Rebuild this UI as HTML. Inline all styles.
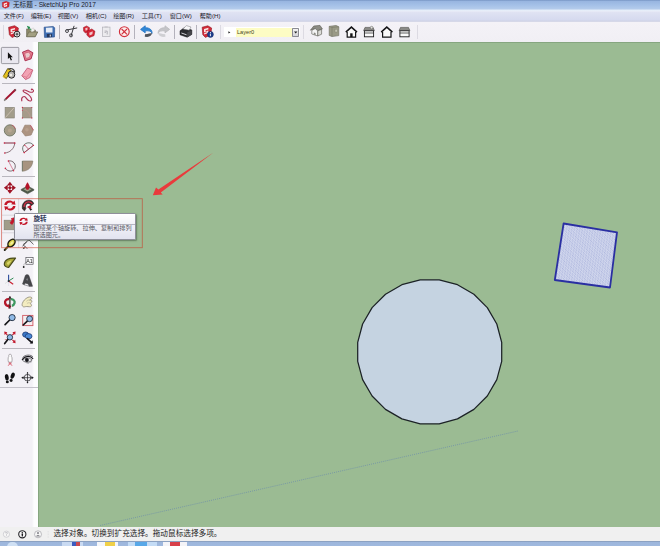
<!DOCTYPE html>
<html><head><meta charset="utf-8"><title>SketchUp</title>
<style>
html,body{margin:0;padding:0;}
body{width:660px;height:546px;overflow:hidden;background:#9bbb93;font-family:"Liberation Sans","Noto Sans CJK SC",sans-serif;color:#222;}
#root{position:relative;width:660px;height:546px;overflow:hidden;}
.abs{position:absolute;}
#title{left:0;top:0;width:660px;height:11.5px;background:linear-gradient(#7391c0 0px,#98b5e0 1.2px,#a4c0e7 5px,#b2caeb 8.5px,#d8e4f5 10px,#f4f7fc 11px,#e6e9f6 11.5px);}
#title span{position:absolute;left:13px;top:0.2px;font-size:6.6px;line-height:9px;color:#1a1a2a;white-space:nowrap;}
#menu{left:0;top:11.5px;width:660px;height:10px;background:linear-gradient(#e0e3f3,#d6daef 7.5px,#d0d3e6 9.3px,#e6e5ee 10px);}
#menu span{position:absolute;top:-0.3px;margin-left:-0.3px;font-size:6.15px;line-height:9px;color:#1a1a2a;white-space:nowrap;}
#tbar{left:0;top:21.5px;width:660px;height:20.5px;background:linear-gradient(#f4f2f7,#f1eff4);}
#left{left:0;top:42px;width:37.5px;height:485px;background:linear-gradient(90deg,#f3f1f6 32px,#fdfdfe 34px);}
#view{left:37.5px;top:42px;width:622.5px;height:485px;background:#9bbb93;box-shadow:inset 1px 1px 0 #86a680;}
#status{left:0;top:527px;width:660px;height:14px;background:#f0f0f0;}
#status span{position:absolute;left:53.4px;top:2.4px;font-size:7.65px;line-height:9px;color:#222;white-space:nowrap;}
#task i{position:absolute;top:1.5px;height:5px;display:block;}
#task{left:0;top:540.5px;width:660px;height:6px;background:linear-gradient(#8093b0 0,#9db6dc 1.2px,#a1badf 100%);}
.vsep{position:absolute;top:25px;width:0.7px;height:14px;background:#b4b2bc;}
.hsep{position:absolute;left:2px;width:33px;height:0.8px;background:#b9b7be;}
#combo{left:224px;top:27.2px;width:76px;height:10.3px;background:#fff;}
#combo .y{position:absolute;left:11.5px;top:1.2px;width:56px;height:8.2px;background:#fdfcc4;}
#combo .t{position:absolute;left:13px;top:0.6px;font-size:5.6px;line-height:9px;color:#45451c;}
#combo .b{position:absolute;left:68.3px;top:0.4px;width:6.8px;height:9.4px;background:linear-gradient(#f4f4f4,#d4d4d8);border:0.5px solid #8a8a92;box-sizing:border-box;border-radius:0.8px;}
#tip{left:14.2px;top:212.6px;width:121.7px;height:27.6px;box-sizing:border-box;border:0.6px solid #8f8f9a;border-radius:1.5px;background:linear-gradient(#ffffff,#f2f2f8 40%,#e2e3ef);box-shadow:1px 1px 1.5px rgba(60,80,60,0.55);}
#tip .h{position:absolute;left:18.2px;top:0.7px;font-size:6.6px;line-height:9px;font-weight:bold;color:#303a5a;white-space:nowrap;}
#tip .ln{position:absolute;left:18.2px;top:10.1px;width:102px;height:0.5px;background:#b4b4c0;}
#tip .d{position:absolute;left:18.2px;font-size:6.15px;line-height:7px;color:#585864;white-space:nowrap;}
</style></head><body><div id="root">
<div id="view" class="abs"></div>
<div id="title" class="abs"><span>无标题 - SketchUp Pro 2017</span></div>
<div id="menu" class="abs"><span style="left:4px">文件(F)</span><span style="left:31px">编辑(E)</span><span style="left:58px">视图(V)</span><span style="left:86px">相机(C)</span><span style="left:113.5px">绘图(R)</span><span style="left:142px">工具(T)</span><span style="left:170px">窗口(W)</span><span style="left:200px">帮助(H)</span></div>
<div id="tbar" class="abs"></div>
<div id="left" class="abs"></div>
<div class="vsep" style="left:59.2px"></div><div class="vsep" style="left:134.3px"></div><div class="vsep" style="left:173.8px"></div><div class="vsep" style="left:195.8px"></div><div class="vsep" style="left:2.6px;background:#dcdae2"></div><div class="vsep" style="left:220px;background:#dcdae2"></div><div class="vsep" style="left:302.5px;background:#dcdae2"></div><div class="vsep" style="left:416.5px;background:#dcdae2"></div><div class="hsep" style="top:83.0px"></div><div class="hsep" style="top:175.6px"></div><div class="hsep" style="top:290.6px"></div><div class="hsep" style="top:348.2px"></div><div class="hsep" style="top:387px;left:0;width:37.5px;background:#c4c2ca"></div>
<div id="combo" class="abs"><div class="y"></div><div class="t">Layer0</div><div class="b"></div></div>
<div id="status" class="abs"><span>选择对象。切换到扩充选择。拖动鼠标选择多项。</span></div>
<div id="task" class="abs"><i style="left:7px;width:11px;background:#cfe0f4;border-radius:5px 5px 0 0"></i><i style="left:62px;width:21px;background:#c9daf2"></i><i style="left:72px;width:4px;background:#3c5cc0"></i><i style="left:76px;width:4px;background:#c84a50"></i><i style="left:97px;width:21px;background:#f4f6fa"></i><i style="left:105px;width:10px;background:#f0d048"></i><i style="left:128px;width:29px;background:#c4dcf6"></i><i style="left:135px;width:12px;background:#58a8e8"></i><i style="left:163px;width:24px;background:#f4f4f8"></i><i style="left:170px;width:10px;background:#d8404a"></i></div>
<svg class="abs" style="left:0;top:0;filter:blur(0.25px)" width="660" height="546" viewBox="0 0 660 546">
<g fill="#f7f7f7" stroke="#8c8c92" stroke-width="0.7"><circle cx="6.4" cy="534.2" r="3.1" stroke="#c4c4ca"/><circle cx="22.3" cy="534.3" r="3.6" stroke="#26262a" stroke-width="1.1"/><circle cx="38" cy="534.3" r="3.5" stroke="#a2a2a8"/></g>
<g font-family="Liberation Sans, sans-serif" font-size="4.6" font-weight="bold" text-anchor="middle"><text x="6.4" y="535.9" fill="#b4b4ba">?</text></g>
<circle cx="22.3" cy="532.9" r="0.8" fill="#1a1a1e"/><path d="M21.5 534 L23.1 534 L22.8 536.6 L21.8 536.6 Z" fill="#1a1a1e"/>
<circle cx="38" cy="533.1" r="1.1" fill="#8a8a90"/><path d="M36 536.6 C36.2 534.4 39.8 534.4 40 536.6 Z" fill="#8a8a90"/>
<path d="M48.2 531 V538" stroke="#c8c8cc" stroke-width="0.5" stroke-dasharray="0.8 0.8"/>
<g transform="translate(-0.9,-1.1)"><path d="M3.2 3.6 L7 2.4 L10.2 3.6 L9.8 7.8 L6.2 9.4 L3.4 8 Z" fill="#d8242e" stroke="#9a1620" stroke-width="0.4"/><path d="M4.6 4.6 L8 3.6 L8 4.8 L6 5.4 L6 6 L8 5.6 L8 7.4 L4.8 8.4 L4.8 7.4 L6.8 6.8 L6.8 6.4 L4.6 7 Z" fill="#fbeaea"/></g>
</svg>
<svg class="abs" style="left:0;top:0" width="660" height="546" viewBox="0 0 660 546">
<defs>
<pattern id="dots" width="2.6" height="1.6" patternUnits="userSpaceOnUse" patternTransform="rotate(9)"><rect width="2.6" height="1.6" fill="#d2d8ee"/><circle cx="0.65" cy="0.4" r="0.37" fill="#8490ca"/><circle cx="1.95" cy="1.2" r="0.37" fill="#8490ca"/></pattern>
</defs>
<polygon points="501.7,361.3 496.8,379.6 487.3,396.0 473.9,409.4 457.5,418.9 439.2,423.8 420.2,423.8 401.9,418.9 385.5,409.4 372.1,396.0 362.6,379.6 357.7,361.3 357.7,342.3 362.6,324.0 372.1,307.6 385.5,294.2 401.9,284.7 420.2,279.8 439.2,279.8 457.5,284.7 473.9,294.2 487.3,307.6 496.8,324.0 501.7,342.3" fill="#c5d3e1" stroke="#1c2226" stroke-width="1.25" stroke-linejoin="round"/>
<polygon points="563.6,223.5 617,232.3 610,287.5 554.8,280" fill="url(#dots)" stroke="#2a2fa2" stroke-width="1.8" stroke-linejoin="round"/>
<line x1="100" y1="525.5" x2="518" y2="431" stroke="#5f7fb0" stroke-width="0.7" stroke-dasharray="0.8 1.2"/>
<polygon points="213.5,152.6 160.8,192.4 162.7,194.6 152.8,195.2 156,187.6 158.4,189.6" fill="#e93a3c"/>
</svg>
<svg class="abs" style="left:0;top:0;filter:blur(0.25px)" width="660" height="546" viewBox="0 0 660 546"><g transform="translate(0,0)"><rect x="1.4" y="47.4" width="17.4" height="16.2" rx="0.8" fill="#e9e7ef" stroke="#86868e" stroke-width="0.8"/></g><g transform="translate(0,0)"><path d="M18.6 199 V248 M2 215.2 H37 M2 232.8 H14.6" stroke="#cfcbd2" stroke-width="0.7" fill="none"/></g><g transform="translate(9.8,55.8)"><path d="M-1.9 -3.6 L-1.9 3.2 L-0.3 1.8 L1.0 4.6 L2.2 4.1 L0.9 1.4 L3.0 1.4 Z" fill="#111"/></g><g transform="translate(27.5,55.4)"><path d="M-5 -3.2 L0.6 -5.4 L5.4 -2.6 L3.6 3.4 L-2.4 5.4 Z" fill="#e27a8c" stroke="#a52244" stroke-width="0.9" stroke-linejoin="round"/><path d="M-2.8 -2 L0.8 -3.2 L3 -1.4 L2 2 L-1.6 3 Z" fill="#f3c4c8" stroke="#b8405a" stroke-width="0.5"/><circle cx="0.2" cy="0" r="1.1" fill="#d8d0d0"/></g><g transform="translate(8.9,73.6)"><path d="M-5.6 2.5 L-1.2 -5 L2.2 -3.4 L-2.6 5 Z" fill="#e6c21e" stroke="#4a4210" stroke-width="0.8" stroke-linejoin="round"/><path d="M-3.6 4.6 L-5.8 3.2 L-5.2 1.8" fill="none" stroke="#e0b818" stroke-width="1"/><ellipse cx="2.6" cy="1" rx="3.3" ry="3.6" fill="#b9b7b4" stroke="#2a2a2a" stroke-width="1"/><path d="M-0.5 -4.6 C2.5 -6 5.6 -4.4 5.8 -1.2" fill="none" stroke="#333" stroke-width="1.1"/><circle cx="2" cy="1.4" r="1.3" fill="#f1efe8"/></g><g transform="translate(27.2,73.6)"><path d="M-5.4 2.2 L0.2 -5.6 L5.6 -3.6 L2.6 4 L-1.6 6 Z" fill="#f2a3b4" stroke="#c0506e" stroke-width="0.8" stroke-linejoin="round"/><path d="M-5.4 2.2 L-0.6 3.6 L5.6 -3.6 M-0.6 3.6 L-1.6 6" fill="none" stroke="#d06880" stroke-width="0.6"/></g><g transform="translate(10,95)"><path d="M-4.6 4.4 L5.4 -5.2" stroke="#a3122e" stroke-width="2" stroke-linecap="butt"/><path d="M-5.8 5.6 L-4 3.8" stroke="#77706c" stroke-width="1.6"/><path d="M4.6 -4.4 L5.8 -5.6" stroke="#7a4a50" stroke-width="2"/></g><g transform="translate(27.8,95.2)"><path d="M-6 5.6 C-7 1.5 -3.5 0.5 -2.2 2.2 C-0.5 4.5 1.5 6.5 3.2 5.6 C4.8 4.6 3 1.2 0.6 -0.6 C-2.4 -2.8 -5.4 -3.2 -4.6 -4.8 C-3.6 -6.4 0.6 -3.4 2.6 -3 C5.2 -2.6 6.6 -4.2 5 -5.6 C4.2 -6.4 3.4 -6 3.6 -5.4" fill="none" stroke="#ae3654" stroke-width="1.15" stroke-linecap="round"/></g><g transform="translate(9.7,112.7)"><rect x="-4.6" y="-5.3" width="9.2" height="10.6" fill="#a29c8a" stroke="#7f7c70" stroke-width="0.6"/><path d="M-4.4 5 L4.4 -5" stroke="#cdbfb2" stroke-width="0.9"/></g><g transform="translate(27.1,112.7)"><rect x="-4.8" y="-5.3" width="9.6" height="10.6" fill="#a69a8a" stroke="#8a8274" stroke-width="0.5"/><path d="M-4.6 -3 C-1 -3.4 2.6 0 3.4 5" stroke="#c09a94" stroke-width="0.7" fill="none"/><g fill="#c8324e"><circle cx="-4.7" cy="-5.2" r="0.65"/><circle cx="4.7" cy="-5.2" r="0.5"/><circle cx="-4.7" cy="5.2" r="0.65"/><circle cx="4.7" cy="5.2" r="0.65"/><circle cx="-4.7" cy="-2.4" r="0.5"/></g></g><g transform="translate(9.9,130.4)"><circle r="5.6" fill="#a59c88" stroke="#6c7462" stroke-width="0.9"/><circle r="2" fill="#b7a792"/><path d="M2 -5.4 A5.7 5.7 0 0 1 5.5 -1.6" stroke="#c85060" stroke-width="0.7" fill="none"/></g><g transform="translate(27.5,130.4)"><path d="M-2.6 -5.2 L2.8 -5.2 L5.8 -0.4 L3.6 4.6 L-2.2 5.6 L-5.6 1.2 Z" fill="#ad9482" stroke="#96806e" stroke-width="0.7" stroke-linejoin="round"/><circle cx="-0.6" cy="-0.6" r="1.8" fill="#b9a08e"/><path d="M3 -5.2 L5.8 -0.4" stroke="#c8405a" stroke-width="0.7"/></g><g transform="translate(9.6,148)"><path d="M-5.2 -5 L5.2 -5 M5.2 -5 C4.6 1 0 4.6 -4.8 5" fill="none" stroke="#5c4048" stroke-width="0.7"/><path d="M-5.2 -5 L5.2 -5" stroke="#b03050" stroke-width="0.6"/><g fill="#d02848"><circle cx="-5.2" cy="-5" r="0.8"/><circle cx="5.2" cy="-5" r="0.8"/><circle cx="-4.8" cy="5" r="0.8"/></g></g><g transform="translate(27.4,148)"><path d="M-3.2 4.6 C-7 0 -3.4 -5.4 1.6 -5.2 C4 -5 5.4 -3.8 6 -2.6 Z" fill="none" stroke="#4c5a50" stroke-width="0.8"/><path d="M-3.2 4.6 L6 -2.6 M-2.6 -2.8 L1.2 1.2" stroke="#b83050" stroke-width="0.7"/><g fill="#d02848"><circle cx="-3.2" cy="4.6" r="0.8"/><circle cx="6" cy="-2.6" r="0.7"/><circle cx="-2.6" cy="-2.8" r="0.6"/></g></g><g transform="translate(10.2,166)"><path d="M-1.8 -5 C3 -6 6.4 -1.4 4.6 2.6 C3 5.8 -2.6 6 -4.8 2.4" fill="none" stroke="#5a4a50" stroke-width="0.8"/><path d="M-1.8 -5 L3.4 4.8" stroke="#c04060" stroke-width="0.6"/><g fill="#d02848"><circle cx="-1.8" cy="-5" r="0.8"/><circle cx="-4.8" cy="2.4" r="0.8"/><circle cx="3.4" cy="4.8" r="0.7"/></g></g><g transform="translate(27.4,166)"><path d="M-5 -5 L5.4 -5 C5 1 0.6 5 -5 5.2 Z" fill="#a89480" stroke="#807868" stroke-width="0.6"/><path d="M-5 -5 L-5 5.2" stroke="#707868" stroke-width="0.9"/></g><g transform="translate(9.9,187.8)"><g fill="#a01426"><path d="M0 -6 L3 -2.2 L-3 -2.2 Z M0 6 L3 2.2 L-3 2.2 Z M-6 0 L-2.2 -3 L-2.2 3 Z M6 0 L2.2 -3 L2.2 3 Z"/><rect x="-1.1" y="-1.1" width="2.2" height="2.2"/><rect x="-0.5" y="-2.4" width="1" height="4.8"/><rect x="-2.4" y="-0.5" width="4.8" height="1"/></g></g><g transform="translate(27.5,188.4)"><path d="M-6.4 1 L0 -2.4 L6.4 1 L6.4 1.8 L0 5.4 L-6.4 1.8 Z" fill="#4e5a4a" stroke="#3c463a" stroke-width="0.5" stroke-linejoin="round"/><path d="M-4 0.9 L0 -1.2 L4 0.9 L0 3.2 Z" fill="#a4a48c"/><path d="M0 -6.2 C0.8 -5 2.4 -2.6 2.2 -1.4 C2 -0.4 1.2 0.2 1 1.4 L-1 1.4 C-1.2 0.2 -2 -0.4 -2.2 -1.4 C-2.4 -2.6 -0.8 -5 0 -6.2 Z" fill="#b4142a"/></g><g transform="translate(9.9,205.4)"><g id="rot"><path d="M-5.6 -0.4 C-5.4 -3.6 -2.4 -5.2 0.4 -4.8 C1.6 -4.6 2.6 -4.2 3.3 -3.5 L4.6 -4.9 L5.6 -0.6 L1.2 -1.1 L2.4 -2.3 C1.2 -3.2 -0.6 -3.2 -1.8 -2.4 C-2.6 -1.9 -3 -1.2 -3.1 -0.4 Z" fill="#c4162a"/><path d="M5.6 0.6 C5.4 3.8 2.4 5.4 -0.4 5 C-1.6 4.8 -2.6 4.4 -3.3 3.7 L-4.6 5.1 L-5.6 0.8 L-1.2 1.3 L-2.4 2.5 C-1.2 3.4 0.6 3.4 1.8 2.6 C2.6 2.1 3 1.4 3.1 0.6 Z" fill="#c4162a"/></g></g><g transform="translate(27.5,205.4)"><path d="M-5 3.6 C-6.2 -1.4 -2.6 -5.4 1.6 -5.2 C4.2 -5 5.8 -3.6 6.2 -1.6 L3.4 0.4 C3 -1.2 2 -2 0.6 -2 C-1.6 -2 -2.6 0.6 -1.6 3 L-3 5.4 Z" fill="#3a2c2c" stroke="#1e1a1a" stroke-width="0.6"/><path d="M-3.4 1.6 C-3.6 -1.4 -1.4 -3.8 1.4 -3.6 C3 -3.5 4.2 -2.8 4.8 -1.6" fill="none" stroke="#d4304a" stroke-width="1.3"/><path d="M-0.6 1.6 L3.6 -0.6 L3.8 4.2 Z" fill="#b8142c"/><path d="M1.2 2.6 L4.8 3.8 L3 5.4 Z" fill="#2a2222"/></g><g transform="translate(0,0)"><rect x="4.1" y="220.2" width="11" height="9.6" fill="#a09c88" stroke="#7e7c6e" stroke-width="0.6"/><path d="M10 223 L12.2 219.8 L11 218.8 L15.4 217.2 L15.4 222 L14.2 221 L12.2 224.4 Z" fill="#c4142a" stroke="#c4142a" stroke-width="0.6" stroke-linejoin="round"/></g><g transform="translate(9.9,244.2)"><path d="M-5.2 5.8 L-1.8 2.2" stroke="#1c1a10" stroke-width="1.9" stroke-linecap="round"/><path d="M-4.6 5.2 L-1.8 2.2" stroke="#d6b41a" stroke-width="0.8"/><ellipse cx="1.6" cy="-1.2" rx="4.4" ry="2.9" transform="rotate(-48 1.6 -1.2)" fill="#d9d24a" stroke="#1c1a10" stroke-width="1.3"/><ellipse cx="1.9" cy="-1.3" rx="2" ry="1.1" transform="rotate(-48 1.9 -1.3)" fill="#f2ee9a"/></g><g transform="translate(27.5,245)"><path d="M-5 1.4 L1.2 -5.4 L6 -0.6 M-0.6 -3.4 L-4.6 -0.2 M-3.8 0.2 L-0.2 3.8 M-4.6 3.6 L-2.2 1.6" fill="none" stroke="#2c2c2c" stroke-width="0.7"/><path d="M0.4 -5.2 L2.2 -5.8 L1.6 -4 Z" fill="#222"/><path d="M-3.8 2.4 L-2.6 3.6 L-4.4 4 Z" fill="#222"/></g><g transform="translate(9.9,262.6)"><path d="M-5.6 1.6 C-5.4 -2.8 -0.6 -5.2 5.6 -4.4 L-1.2 4.8 C-3.6 4.6 -5.4 3.6 -5.6 1.6 Z" fill="#a8a638" stroke="#4a4c1e" stroke-width="1.2" stroke-linejoin="round"/><path d="M-3.2 1.4 C-3 -0.8 -0.6 -2.2 1.8 -2.2 L-1.4 2.4 Z" fill="#d8d468"/></g><g transform="translate(0,0)"><rect x="25.9" y="257.6" width="7.2" height="6.6" fill="#fbfbfd" stroke="#3a3a40" stroke-width="0.6"/><text x="29.5" y="263" font-family="Liberation Sans, sans-serif" font-size="5.4" text-anchor="middle" fill="#222">A1</text><path d="M25.8 262.4 L24 264.4 L23.7 266.4" fill="none" stroke="#555" stroke-width="0.5" stroke-dasharray="0.8 0.5"/><circle cx="23.7" cy="267" r="0.9" fill="#1a1a1a"/></g><g transform="translate(9.6,280.4)"><path d="M-1 0.6 L-1 -5.6" stroke="#2a4a9a" stroke-width="1.1"/><path d="M-1 0.6 L3.8 -2.4" stroke="#2e8a52" stroke-width="1"/><path d="M-1 0.6 L3.6 3.8" stroke="#c81e30" stroke-width="1.1"/><path d="M-1 0.6 L-4.6 3.2" stroke="#9ab0a0" stroke-width="0.5" stroke-dasharray="0.7 0.6"/><path d="M-1 0.6 L-1 5" stroke="#a0a8c8" stroke-width="0.5" stroke-dasharray="0.7 0.6"/><circle cx="-1" cy="0.6" r="1" fill="#1e2a3a"/></g><g transform="translate(27.4,280.4)"><path d="M-4.8 3.6 L-2 -5 C-1.6 -6 1 -6 1.4 -5 L4.6 4.4 L5 5.8 L1.6 5.8 L1 3.6 L-2.4 2.6 L-3 4.4 Z" fill="#46464a" stroke="#2c2c30" stroke-width="0.5" stroke-linejoin="round"/><path d="M-4.8 3.6 L-3 4.4 L1.6 5.8 L5 5.8" fill="none" stroke="#77777c" stroke-width="0.7"/><path d="M-1.2 -0.4 L0.6 0.2 L-0.2 -2.6 Z" fill="#8a8a90"/></g><g transform="translate(9.9,302.6)"><path d="M-0.8 -3.4 C-3.8 -3.6 -5.2 -1.6 -4.8 0.4 C-4.4 2.4 -2.6 3.6 -0.6 3.6" fill="none" stroke="#b4182c" stroke-width="2.3"/><path d="M-1.4 1.2 L1.6 3.8 L-1.6 6.2 Z" fill="#b4182c"/><path d="M0.8 -3.4 C3.8 -3.6 5.2 -1.4 4.6 0.6 C4.2 2 3.2 2.8 2 3.2" fill="none" stroke="#3d9860" stroke-width="2.3"/><path d="M0 -6.2 L0 6.2" stroke="#3a2a2a" stroke-width="1.3"/><path d="M-1.6 -4.2 L0 -6.6 L1.6 -4.2 Z" fill="#3a2a2a"/></g><g transform="translate(27.3,302.2)"><g transform="scale(0.9)"><path d="M-5.6 1.6 C-4.6 -1.4 -2.4 -4 0.8 -5.4 C2.8 -6.2 5 -5.6 5.2 -4.6 C5.4 -3.6 3 -3.2 2.6 -2.4 C4 -2.6 5.4 -1.8 5 -0.6 C4.6 0.4 3.4 0.4 3.6 1.4 C3.8 2.4 5.2 3 4.4 4.4 C3.6 5.6 1.2 4.8 -0.6 4.8 C-2.6 4.8 -3.4 5.6 -4.6 5 C-5.8 4.2 -6 2.8 -5.6 1.6 Z" fill="#f3ecc0" stroke="#8e8a78" stroke-width="0.9" stroke-linejoin="round"/><path d="M-1 -1 C0.4 -2.4 1.6 -2.6 2.6 -2.4 M-0.4 1.4 C1 0.4 2.4 0.4 3.6 1.2" fill="none" stroke="#a8a490" stroke-width="0.6"/></g></g><g transform="translate(0,0)"><path d="M9.93 319.77000000000004 L5.1 324.6" stroke="#16161a" stroke-width="1.7" stroke-linecap="round"/><circle cx="12.1" cy="317.6" r="3.1" fill="#8fb9e6" stroke="#1e2a3c" stroke-width="0.9"/></g><g transform="translate(0,0)"><rect x="22.7" y="315.4" width="10.2" height="10.2" fill="#f6eef0" stroke="#d05a64" stroke-width="0.9"/><path d="M27.57 320.83 L23.200000000000003 325.0" stroke="#16161a" stroke-width="1.7" stroke-linecap="round"/><circle cx="29.6" cy="318.8" r="2.9" fill="#8fb9e6" stroke="#1e2a3c" stroke-width="0.9"/></g><g transform="translate(0,0)"><g fill="#c21a2e"><path d="M4.2 331.6 L7.4 332.2 L6.4 333.2 L7.8 334.6 L7 335.4 L5.6 334 L4.6 335 Z"/><path d="M15.6 331.6 L12.4 332.2 L13.4 333.2 L12 334.6 L12.8 335.4 L14.2 334 L15.2 335 Z"/><path d="M15.6 343.2 L12.4 342.6 L13.4 341.6 L12 340.2 L12.8 339.4 L14.2 340.8 L15.2 339.8 Z"/><path d="M4.4 339.6 L6.8 339.6 L6.8 340.6 Z"/></g><path d="M8.01 339.19 L4.7 343.5" stroke="#16161a" stroke-width="1.7" stroke-linecap="round"/><circle cx="9.9" cy="337.3" r="2.7" fill="#8fb9e6" stroke="#1e2a3c" stroke-width="0.9"/></g><g transform="translate(0,0)"><ellipse cx="25.6" cy="334.6" rx="3" ry="2.6" fill="#3a78c8" stroke="#1c3a74" stroke-width="0.8"/><ellipse cx="28.6" cy="336.2" rx="3.4" ry="2.6" fill="#4a8ad8" stroke="#1c3a74" stroke-width="0.8"/><path d="M27.4 338.6 L31.6 342.4" stroke="#121216" stroke-width="1.6" stroke-linecap="round"/><path d="M29.6 343.4 L33 343.6 L32.6 340.2 Z" fill="#121216"/></g><g transform="translate(10.1,360)"><path d="M0 -5.8 C1.2 -5.8 1.6 -4.6 1.3 -3.6 C2.2 -2.8 2.2 0.8 1.6 2.2 L-1.6 2.2 C-2.2 0.8 -2.2 -2.8 -1.3 -3.6 C-1.6 -4.6 -1.2 -5.8 0 -5.8 Z" fill="#fdfdfd" stroke="#8e8a8e" stroke-width="0.7"/><path d="M-1 2.2 L2 5.8 M1 2.2 L-2 5.8 M-1.4 3.8 L1.4 3.8" stroke="#d85868" stroke-width="0.8" fill="none"/></g><g transform="translate(27.5,359.4)"><path d="M-5.4 0.6 C-3 -3.8 3 -4 5.6 -0.6" fill="none" stroke="#1a1a1e" stroke-width="1.2"/><path d="M-5 -1.8 C-2 -5.2 3.4 -4.8 5.4 -2.6" fill="none" stroke="#3a3a3e" stroke-width="0.7"/><path d="M-4.8 1 C-2.4 3.6 2.2 3.4 4.6 0.6 C2 -2.2 -2.6 -2.2 -4.8 1 Z" fill="#e9e9ee" stroke="#2a2a2e" stroke-width="0.6"/><circle cx="-0.6" cy="0.6" r="1.9" fill="#15151a"/><path d="M2 3 L4.4 2.2 M-1 3.6 L1.6 3.8" stroke="#55555a" stroke-width="0.5"/></g><g transform="translate(9.7,377.9)"><g fill="#121214"><ellipse cx="-2.9" cy="-0.6" rx="1.9" ry="3.2" transform="rotate(-8 -2.9 -0.6)"/><ellipse cx="-2.4" cy="4" rx="1.5" ry="1.4"/><ellipse cx="3" cy="-2.2" rx="1.9" ry="3.2" transform="rotate(20 3 -2.2)"/><ellipse cx="1.4" cy="2.6" rx="1.5" ry="1.4"/></g></g><g transform="translate(27.5,377.7)"><circle r="3.3" fill="none" stroke="#1c1c20" stroke-width="0.7"/><path d="M-5.6 0 L5.6 0 M0 -5.4 L0 5.4" stroke="#1c1c20" stroke-width="0.7"/><path d="M-6.2 0 L-4 -1.4 L-4 1.4 Z M6.2 0 L4 -1.6 L4 1.6 Z M0 -5.8 L-1 -4.4 L1 -4.4 Z M0 5.8 L-1 4.4 L1 4.4 Z" fill="#1c1c20"/></g><g transform="translate(14,31.7)"><path d="M-5.4 -4.4 L0.6 -6 L4.4 -3.6 L3.4 3.4 L-2 5.8 L-4.6 3 Z" fill="#d22a38" stroke="#8e1420" stroke-width="0.6" stroke-linejoin="round"/><path d="M-3.4 -2.6 L1 -3.8 L1 -2.2 L-1.8 -1.4 L-1.8 -0.4 L1 -1 L1 1.4 L-3.2 2.8 L-3.2 1.4 L-0.6 0.6 L-0.6 0 L-3.4 0.6 Z" fill="#f8e6e6"/><circle cx="3" cy="2.4" r="2.9" fill="#f4f4f4" stroke="#151515" stroke-width="0.9"/><path d="M3 0.8 L3 4 M1.4 2.4 L4.6 2.4" stroke="#111" stroke-width="0.8"/></g><g transform="translate(31.8,31.7)"><path d="M-5.2 5 L-5.2 -2.8 L-2 -2.8 L-1 -1.6 L3.6 -1.6 L3.6 0.2 L5.8 0.2 L3.4 5 Z" fill="#8d8a6a" stroke="#5e5c48" stroke-width="0.6" stroke-linejoin="round"/><path d="M-5.2 5 L-3 0.4 L5.8 0.4 L3.4 5 Z" fill="#a3a082" stroke="#5e5c48" stroke-width="0.5"/><path d="M-1.8 -2 L1.6 -3.8 L2.8 -1 L0 0.2 Z" fill="#f4f2ee" stroke="#aaa" stroke-width="0.3"/><path d="M-5 -6 L-1.6 -4.8 L-3.2 -2.2 Z" fill="#1e8a4a"/><path d="M-3 -4 C-1.8 -3.6 -1 -2.6 -0.8 -1.4" stroke="#1e8a4a" stroke-width="1" fill="none"/></g><g transform="translate(49.3,32)"><path d="M-5.2 -4.8 L3.8 -5.6 L5.4 -4.2 L5.2 5 L-4.8 5.4 Z" fill="#3f6fb4" stroke="#264a84" stroke-width="0.6" stroke-linejoin="round"/><path d="M-3.4 -4.2 L3.2 -4.6 L3.2 0.4 L-3.4 0.6 Z" fill="#e6ecf6"/><path d="M-2.4 2 L2.6 1.8 L2.6 5 L-2.4 5.2 Z" fill="#25365a"/><rect x="0.4" y="2.6" width="1.2" height="2" fill="#cfd6e4"/></g><g transform="translate(71.4,31.6)"><path d="M-4.6 -1.6 L5.4 -3.6 M-0.4 4.4 L2.6 -5.4" stroke="#3a3a3e" stroke-width="1" stroke-linecap="round"/><circle cx="-4.4" cy="-0.6" r="1.5" fill="none" stroke="#3a3a3e" stroke-width="0.9"/><circle cx="-0.4" cy="3.8" r="1.5" fill="none" stroke="#3a3a3e" stroke-width="0.9"/></g><g transform="translate(89.2,31.7)"><path d="M-5.8 -4.2 L-2.6 -5.8 L0.4 -4 L-0.4 0 L-3.8 1.4 L-5.6 -0.6 Z" fill="#d42434" stroke="#961420" stroke-width="0.5"/><path d="M-2 -0.6 L2.6 -2.8 L5.8 -0.4 L4.8 4 L0.2 5.8 L-2.4 3.4 Z" fill="#d42434" stroke="#961420" stroke-width="0.5"/><path d="M-4 -3.4 L-1.6 -4.2 L-1.8 -1.6 L-3.6 -1 Z M0 1 L3.6 -0.4 L3.2 2.6 L0.4 3.8 Z" fill="#f2c4c8"/></g><g transform="translate(106.2,31.7)"><rect x="-3.8" y="-4.6" width="7.6" height="9.4" fill="#ecebee" stroke="#b2b1b8" stroke-width="0.7"/><rect x="-1.6" y="-5.4" width="3.2" height="1.6" fill="#c9c8ce"/><path d="M-1.6 -0.6 L1 -0.6 L1 2.8 M-1.6 0.8 L-0.4 0.8" stroke="#a4a3ab" stroke-width="0.8" fill="none"/></g><g transform="translate(124.3,31.7)"><circle r="4.9" fill="#fbecec" stroke="#d2303c" stroke-width="1.1"/><path d="M-2.7 -2.7 L2.7 2.7 M2.7 -2.7 L-2.7 2.7" stroke="#d2303c" stroke-width="1.1"/></g><g transform="translate(146.6,31.6)"><path d="M-6 -2.2 L-1.4 -5.8 L-1.4 -3.8 C3 -4 5.8 -1.6 5.4 1.8 C5 -0.6 2.4 -1 -1.4 -0.8 L-1.4 1.2 Z" fill="#2f86d6" stroke="#2a78c6" stroke-width="0.9" stroke-linejoin="round"/><path d="M-1.6 2.6 C1.6 2.2 4 1.8 5.4 1.4 C5.2 3.6 3.4 5.2 0.6 5.4 L-1.8 5.2 Z" fill="#50545c"/></g><g transform="translate(163.6,31.6)"><path d="M6 -2.2 L1.4 -5.8 L1.4 -3.8 C-3 -4 -5.8 -1.6 -5.4 1.8 C-5 -0.6 -2.4 -1 1.4 -0.8 L1.4 1.2 Z" fill="#c4c4c8" stroke="#bcbcc0" stroke-width="0.9" stroke-linejoin="round"/><path d="M1.6 2.6 C-1.6 2.2 -4 1.8 -5.4 1.4 C-5.2 3.6 -3.4 5.2 -0.6 5.4 L1.8 5.2 Z" fill="#cfcfd3"/></g><g transform="translate(185.8,31.4)"><path d="M-5.8 -0.6 L-1.6 -3.6 L6 -1.4 L6 3 L1.4 5.8 L-5.8 3.4 Z" fill="#2a2a2e" stroke="#121214" stroke-width="0.5" stroke-linejoin="round"/><path d="M-3 -2.4 L0.6 -5.8 L5.2 -4.4 L3.4 -1.2 Z" fill="#f6f6f8" stroke="#55555a" stroke-width="0.4"/><path d="M-4.4 1.6 L0.8 3.4" stroke="#e0e0e4" stroke-width="0.9"/><path d="M1.4 1 L6 -1.4 L6 3 L1.4 5.8 Z" fill="#45454a"/></g><g transform="translate(207.4,31.8)"><path d="M-5.2 -4.6 L0.4 -6 L4.2 -3.8 L3.4 3 L-2 5.6 L-4.6 3 Z" fill="#d22a38" stroke="#8e1420" stroke-width="0.6" stroke-linejoin="round"/><path d="M-3.4 -2.8 L1 -4 L1 -2.4 L-1.8 -1.6 L-1.8 -0.6 L1 -1.2 L1 1.2 L-3.2 2.6 L-3.2 1.2 L-0.6 0.4 L-0.6 -0.2 L-3.4 0.4 Z" fill="#f8e6e6"/><circle cx="3" cy="2.6" r="3" fill="#1e3f8e" stroke="#10255c" stroke-width="0.5"/><path d="M3 1.8 L3 4.4" stroke="#fff" stroke-width="0.9"/><circle cx="3" cy="0.7" r="0.55" fill="#fff"/></g><g transform="translate(0,0)"><path d="M228.4 31.3 L230.4 32.4 L228.4 33.5 Z" fill="#222"/><path d="M294 31.6 L297.4 31.6 L295.7 33.6 Z" fill="#222"/></g><g transform="translate(316.4,31)"><path d="M-6 -0.8 L-2.6 -5 L3.6 -5.6 L6 -2 L1.4 -0.4 L-1.2 -2.6 Z" fill="#8c8c84" stroke="#55554e" stroke-width="0.6" stroke-linejoin="round"/><path d="M-4.6 -0.6 L-1.2 -2.4 L1.4 -0.2 L1.4 5 L-4.6 3 Z" fill="#f4f4f4" stroke="#55554e" stroke-width="0.6"/><path d="M1.4 -0.2 L5.2 -1.6 L5.2 3.2 L1.4 5 Z" fill="#dcdcd8" stroke="#55554e" stroke-width="0.6"/><path d="M-2.6 1.4 L-0.8 2 L-0.8 4.2 L-2.6 3.6 Z" fill="#8a8a84"/></g><g transform="translate(334,31)"><path d="M-4.8 -4.6 L2 -5.6 L4.8 -4.2 L4.8 4.6 L-2 5.6 L-4.8 4.4 Z" fill="#9a9a86" stroke="#6c6c5c" stroke-width="0.6" stroke-linejoin="round"/><path d="M-2 -3.6 L-2 5.4 M-4.8 -4.6 L-2 -3.6 L4.8 -4.2" fill="none" stroke="#6c6c5c" stroke-width="0.5"/><rect x="1" y="-1.8" width="2.4" height="2.8" fill="#c4c4b2" stroke="#70705e" stroke-width="0.3"/></g><g transform="translate(351.4,32.3)"><path d="M-5.6 -0.2 L0 -5.2 L5.6 -0.2" fill="#fafafa" stroke="#141416" stroke-width="1.5" stroke-linejoin="miter"/><path d="M-4.2 -0.8 L-4.2 4.8 L4.2 4.8 L4.2 -0.8" fill="#fafafa" stroke="#141416" stroke-width="1.2"/><rect x="-1.2" y="1" width="2.4" height="3.8" fill="#141416"/></g><g transform="translate(369,32)"><path d="M-5.4 -1.4 L-4 -4.6 L4 -4.6 L5.4 -1.4 Z" fill="#8a8a86" stroke="#4c4c48" stroke-width="0.6" stroke-linejoin="round"/><rect x="-4.6" y="-1.2" width="9.2" height="6" fill="#fafafa" stroke="#1c1c1e" stroke-width="0.9"/><path d="M-4.6 1 L4.6 1" stroke="#1c1c1e" stroke-width="0.7"/><circle cx="2.6" cy="-4.4" r="1.3" fill="#e4e4e0" stroke="#5c5c58" stroke-width="0.5"/></g><g transform="translate(386.8,32.3)"><path d="M-5.6 -0.2 L0 -5.2 L5.6 -0.2" fill="#fafafa" stroke="#141416" stroke-width="1.5" stroke-linejoin="miter"/><path d="M-4.2 -0.8 L-4.2 4.8 L4.2 4.8 L4.2 -0.8" fill="#fafafa" stroke="#141416" stroke-width="1.2"/></g><g transform="translate(404.5,32)"><path d="M-5.4 -1.4 L-4 -4.6 L4 -4.6 L5.4 -1.4 Z" fill="#8a8a86" stroke="#4c4c48" stroke-width="0.6" stroke-linejoin="round"/><rect x="-4.6" y="-1.2" width="9.2" height="6" fill="#fafafa" stroke="#1c1c1e" stroke-width="0.9"/><path d="M-4.6 1 L4.6 1" stroke="#1c1c1e" stroke-width="0.7"/></g></svg>
<div id="tip" class="abs"><div class="h">旋转</div><div class="ln"></div><div class="d" style="top:10.1px">围绕某个轴旋转、拉伸、复制和排列</div><div class="d" style="top:17.2px">所选图元。</div>
<svg class="abs" style="left:0;top:0;filter:blur(0.25px)" width="20" height="16" viewBox="0 0 20 16"><g transform="translate(8.6,7.3) scale(0.74)"><g ><path d="M-5.6 -0.4 C-5.4 -3.6 -2.4 -5.2 0.4 -4.8 C1.6 -4.6 2.6 -4.2 3.3 -3.5 L4.6 -4.9 L5.6 -0.6 L1.2 -1.1 L2.4 -2.3 C1.2 -3.2 -0.6 -3.2 -1.8 -2.4 C-2.6 -1.9 -3 -1.2 -3.1 -0.4 Z" fill="#c4162a"/><path d="M5.6 0.6 C5.4 3.8 2.4 5.4 -0.4 5 C-1.6 4.8 -2.6 4.4 -3.3 3.7 L-4.6 5.1 L-5.6 0.8 L-1.2 1.3 L-2.4 2.5 C-1.2 3.4 0.6 3.4 1.8 2.6 C2.6 2.1 3 1.4 3.1 0.6 Z" fill="#c4162a"/></g></g></svg></div>
<svg class="abs" style="left:0;top:0" width="660" height="546" viewBox="0 0 660 546"><rect x="1.6" y="198.7" width="140.7" height="49" fill="none" stroke="#cc3a28" stroke-opacity="0.62" stroke-width="0.9"/></svg>
</div></body></html>
